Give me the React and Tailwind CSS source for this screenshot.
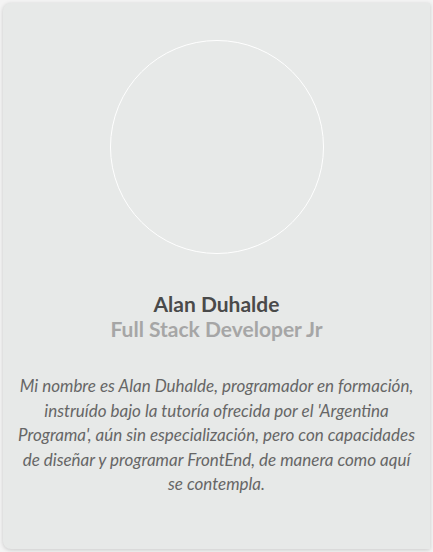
import React from 'react';

const Profile = () => {
  return (
    <div className="min-h-[552px] w-[433px] overflow-hidden bg-[#f4f4f4] pt-[3px] pl-[3px]">
      <div
        className="flex h-[546px] w-[427px] flex-col items-center rounded-l-lg bg-[#e7e9e8] pt-[37px] shadow-[0_1px_4px_rgba(0,0,0,0.18)]"
        style={{ fontFamily: 'Lato, "Open Sans", sans-serif' }}
      >
        {/* foto de perfil (vacía) */}
        <div className="h-[214px] w-[214px] rounded-full border border-white" />

        <h2 className="mt-[37px] text-[21px] font-bold leading-[25px] text-[#4a4a4a]">Alan Duhalde</h2>
        <h3 className="text-[21px] font-bold leading-[25px] text-[#a6a6a6]">Full Stack Developer Jr</h3>

        <p className="mt-[33px] whitespace-nowrap text-center text-[17px] italic leading-[24.5px] text-[#666]">
          Mi nombre es Alan Duhalde, programador en formación,
          <br />
          instruído bajo la tutoría ofrecida por el 'Argentina
          <br />
          Programa', aún sin especialización, pero con capacidades
          <br />
          de diseñar y programar FrontEnd, de manera como aquí
          <br />
          se contempla.
        </p>
      </div>
    </div>
  );
};

export default function App() {
  return <Profile />;
}
